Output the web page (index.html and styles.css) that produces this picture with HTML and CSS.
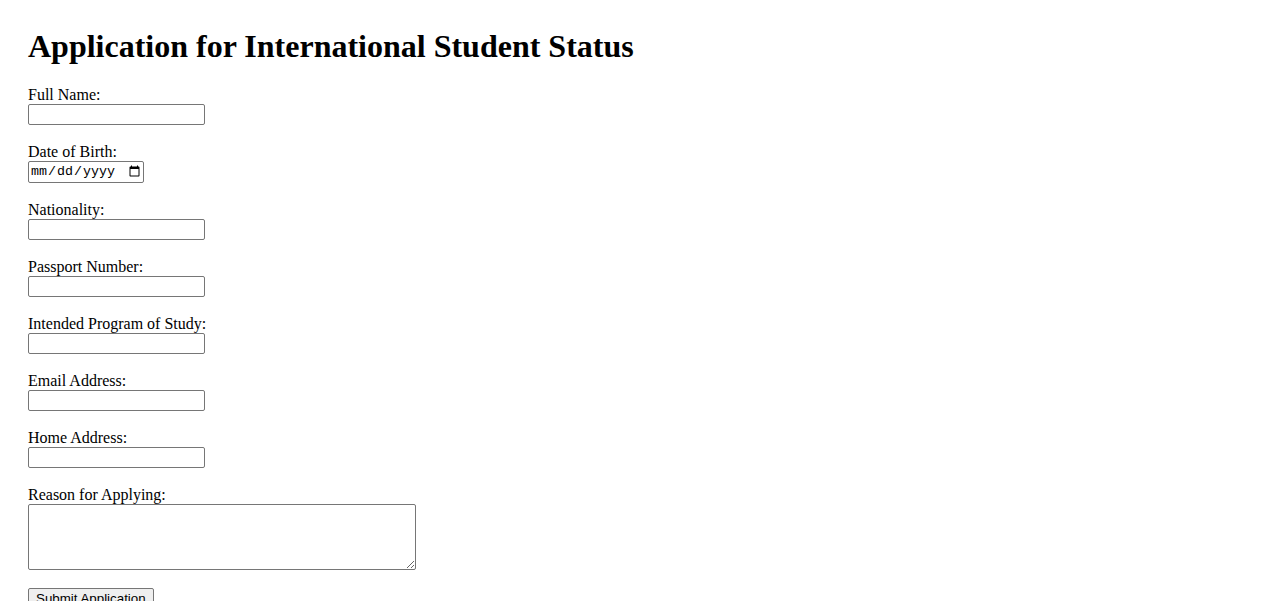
FILE: index.html
```html
<!DOCTYPE html>
<html lang="en">
<head>
<meta charset="utf-8">
<title>Application for International Student Status</title>
<link rel="stylesheet" href="styles.css">
</head>
<body>
<h1 class="title">Application for International Student Status</h1>
<form class="form">
  <div class="field"><label class="label" for="name">Full Name:</label><input class="text" id="name" type="text"></div>
  <div class="field"><label class="label" for="dob">Date of Birth:</label><input class="date" id="dob" type="date"></div>
  <div class="field"><label class="label" for="nat">Nationality:</label><input class="text" id="nat" type="text"></div>
  <div class="field"><label class="label" for="pass">Passport Number:</label><input class="text" id="pass" type="text"></div>
  <div class="field"><label class="label" for="prog">Intended Program of Study:</label><input class="text" id="prog" type="text"></div>
  <div class="field"><label class="label" for="email">Email Address:</label><input class="text" id="email" type="email"></div>
  <div class="field"><label class="label" for="addr">Home Address:</label><input class="text" id="addr" type="text"></div>
  <div class="field"><label class="label" for="reason">Reason for Applying:</label><textarea class="area" id="reason"></textarea></div>
  <button class="submit" type="submit">Submit Application</button>
</form>
</body>
</html>
```
FILE: styles.css
```css
body {
  margin: 0;
  padding: 28px;
  font-family: "Liberation Serif", serif;
  font-size: 16px;
  color: #000;
  background: #fff;
}
.title {
  font-size: 32px;
  font-weight: bold;
  margin: 0 0 21px 0;
  line-height: 37px;
}
.form {
  display: flex;
  flex-direction: column;
  align-items: flex-start;
}
.field {
  display: flex;
  flex-direction: column;
  align-items: flex-start;
  margin-bottom: 18px;
}
.label {
  line-height: 18px;
}
.text {
  width: 177px;
  height: 21px;
  box-sizing: border-box;
  border: 1px solid #767676;
  border-radius: 2px;
  margin: 0;
  font-family: "Liberation Sans", Arial, sans-serif;
  font-size: 13.33px;
}
.date {
  width: 116px;
  height: 22px;
  box-sizing: border-box;
  border: 1px solid #767676;
  border-radius: 2px;
  margin: 0;
  font-family: "Liberation Mono", monospace;
  font-size: 13.33px;
}
.area {
  width: 388px;
  height: 66px;
  box-sizing: border-box;
  border: 1px solid #767676;
  border-radius: 2px;
  margin: 0;
}
.submit {
  font-family: "Liberation Sans", Arial, sans-serif;
  font-size: 13.33px;
  margin: 0;
  padding: 1px 7px;
  height: 21px;
  border: 1px solid #767676;
  border-radius: 2px;
  background: #efefef;
}
```
